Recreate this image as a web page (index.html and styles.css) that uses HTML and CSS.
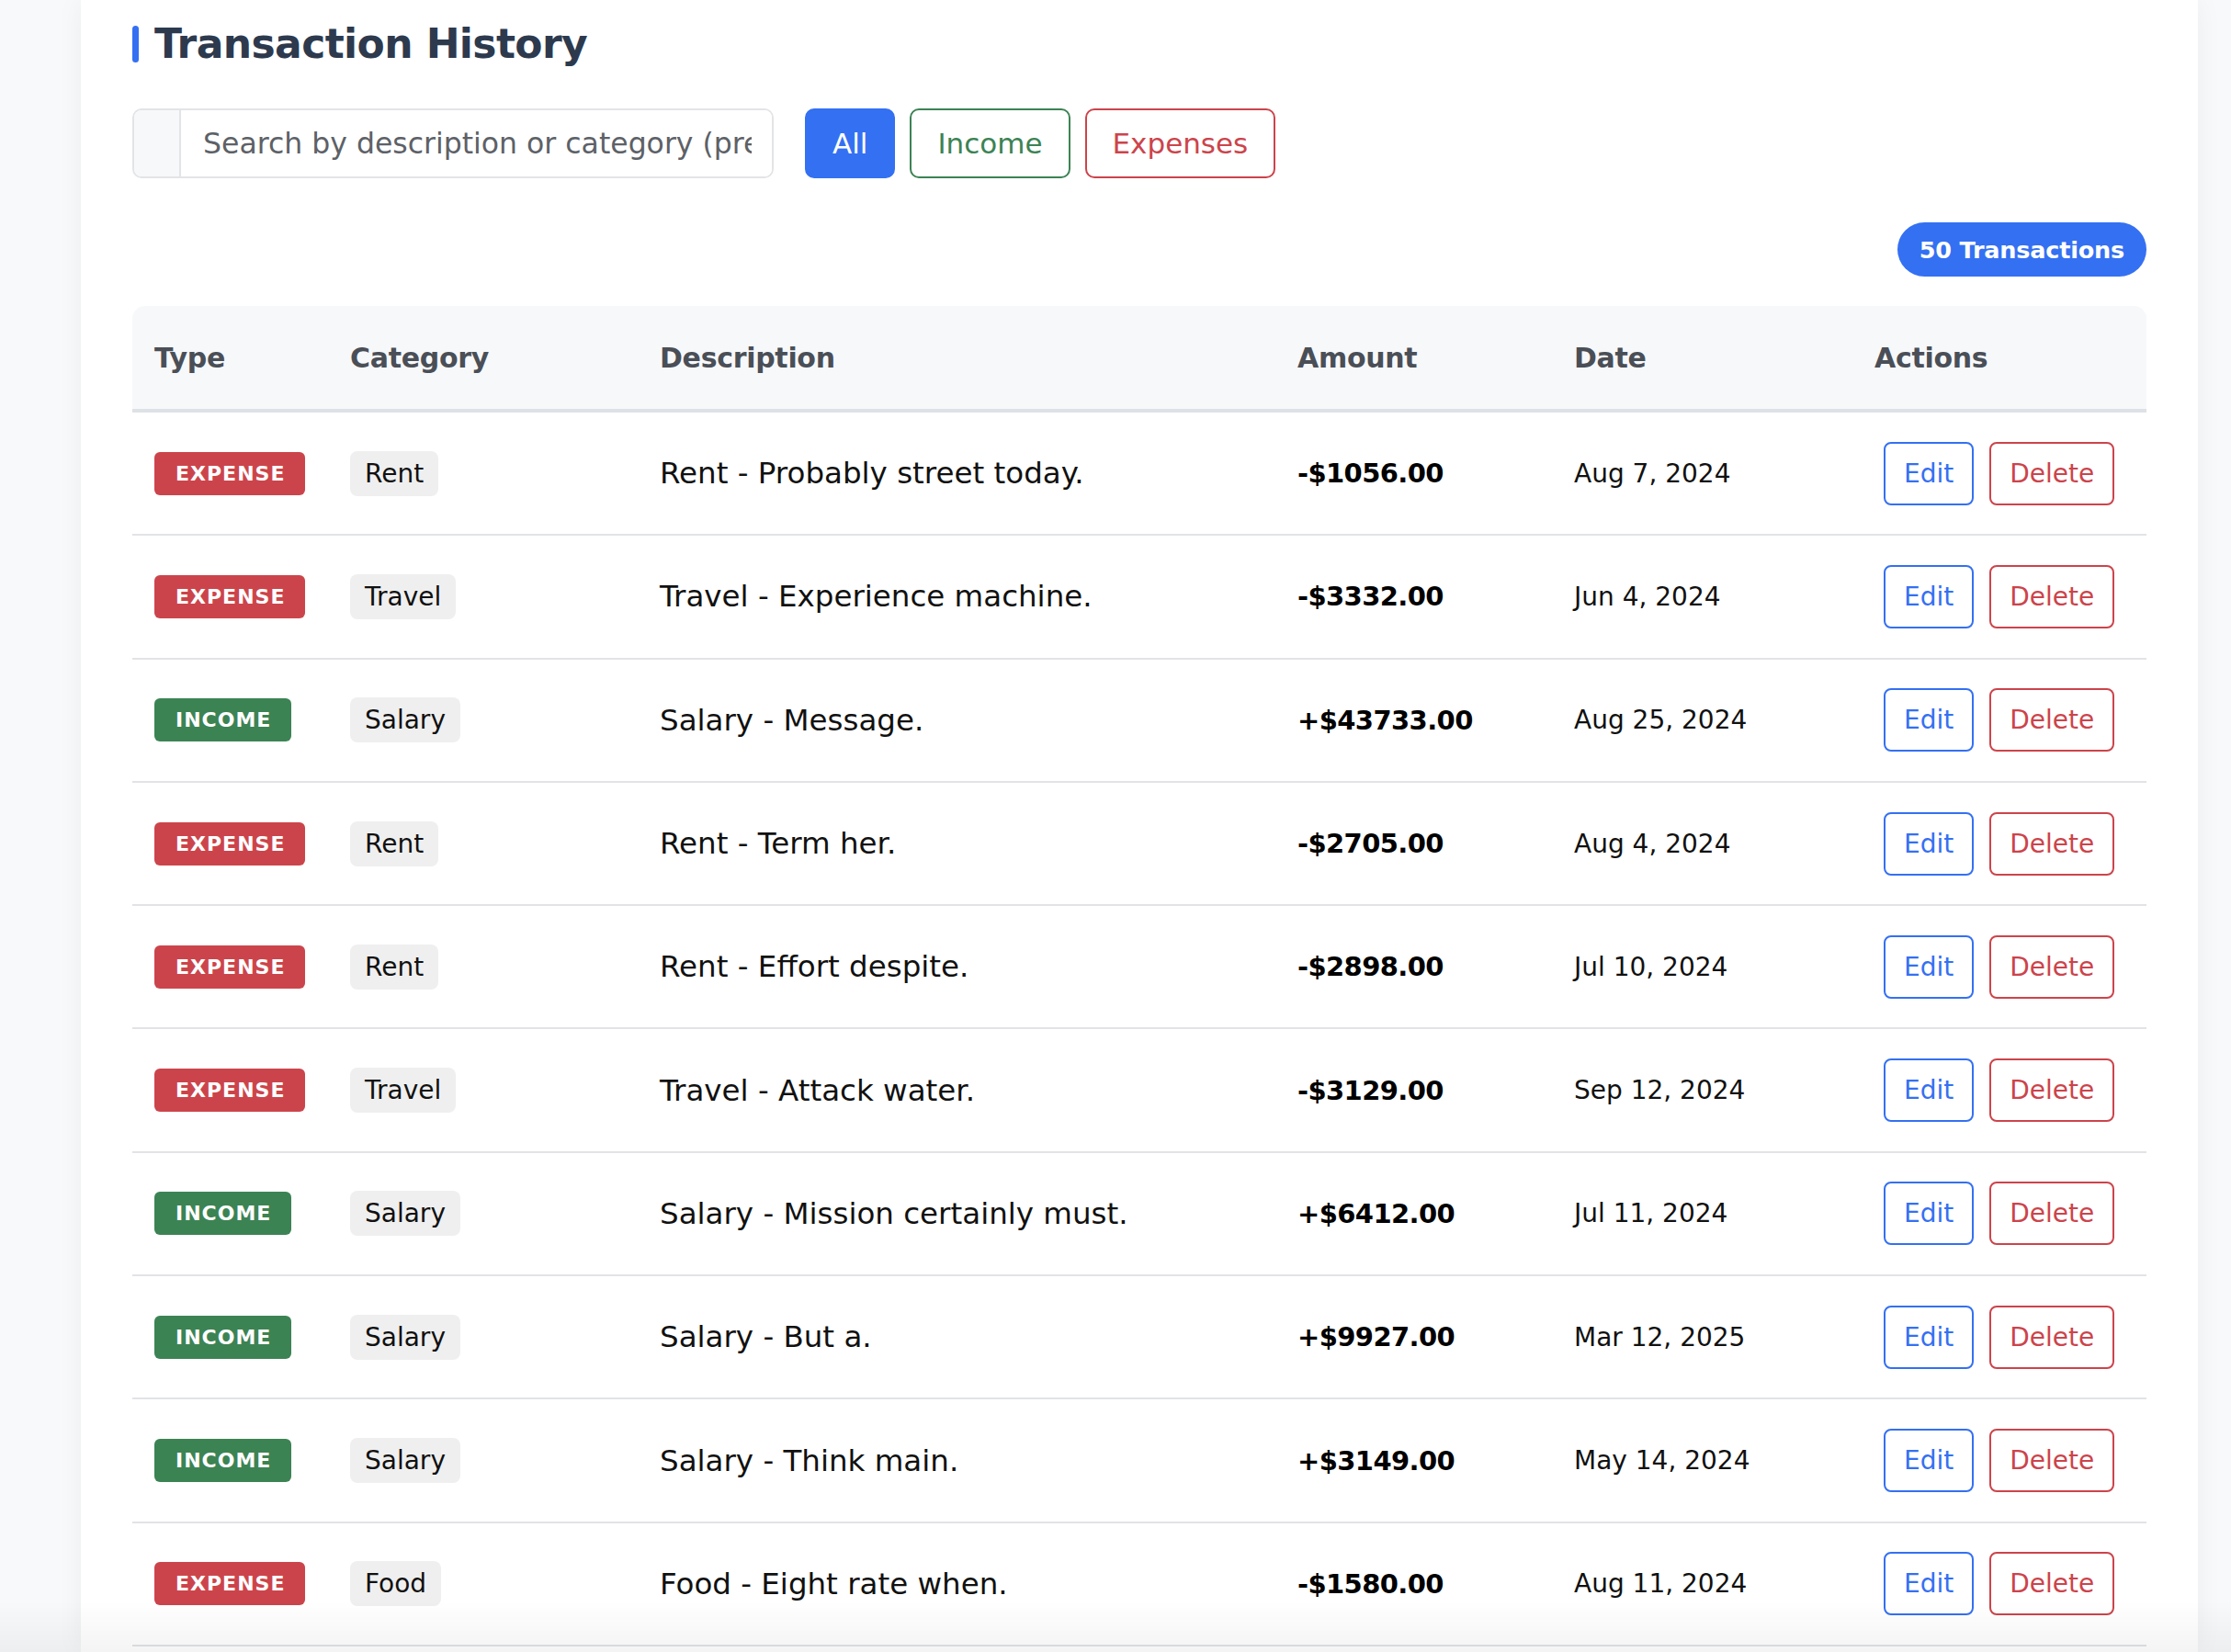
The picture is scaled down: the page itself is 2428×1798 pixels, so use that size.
FILE: index.html
```html
<!DOCTYPE html>
<html lang="en">
<head>
<meta charset="utf-8">
<title>Transaction History</title>
<link rel="stylesheet" href="styles.css">
</head>
<body>
<div class="page">
  <section class="card">
    <h2 class="title"><span class="accent"></span>Transaction History</h2>

    <div class="toolbar">
      <div class="search">
        <span class="search-addon"></span>
        <input class="search-input" type="text" placeholder="Search by description or category (press Enter to search)">
      </div>
      <div class="filters">
        <button class="filter filter-all">All</button>
        <button class="filter filter-income">Income</button>
        <button class="filter filter-expense">Expenses</button>
      </div>
    </div>

    <div class="summary"><span class="count">50 Transactions</span></div>

    <table class="tx">
      <colgroup>
        <col class="c-type"><col class="c-cat"><col class="c-desc"><col class="c-amt"><col class="c-date"><col class="c-act">
      </colgroup>
      <thead>
        <tr><th>Type</th><th>Category</th><th>Description</th><th>Amount</th><th>Date</th><th>Actions</th></tr>
      </thead>
      <tbody>
        <tr><td><span class="type type-exp">EXPENSE</span></td><td><span class="cat">Rent</span></td><td class="desc">Rent - Probably street today.</td><td class="amt">-$1056.00</td><td class="date">Aug 7, 2024</td><td class="act"><button class="btn btn-edit">Edit</button><button class="btn btn-del">Delete</button></td></tr>
        <tr><td><span class="type type-exp">EXPENSE</span></td><td><span class="cat">Travel</span></td><td class="desc">Travel - Experience machine.</td><td class="amt">-$3332.00</td><td class="date">Jun 4, 2024</td><td class="act"><button class="btn btn-edit">Edit</button><button class="btn btn-del">Delete</button></td></tr>
        <tr><td><span class="type type-inc">INCOME</span></td><td><span class="cat">Salary</span></td><td class="desc">Salary - Message.</td><td class="amt">+$43733.00</td><td class="date">Aug 25, 2024</td><td class="act"><button class="btn btn-edit">Edit</button><button class="btn btn-del">Delete</button></td></tr>
        <tr><td><span class="type type-exp">EXPENSE</span></td><td><span class="cat">Rent</span></td><td class="desc">Rent - Term her.</td><td class="amt">-$2705.00</td><td class="date">Aug 4, 2024</td><td class="act"><button class="btn btn-edit">Edit</button><button class="btn btn-del">Delete</button></td></tr>
        <tr><td><span class="type type-exp">EXPENSE</span></td><td><span class="cat">Rent</span></td><td class="desc">Rent - Effort despite.</td><td class="amt">-$2898.00</td><td class="date">Jul 10, 2024</td><td class="act"><button class="btn btn-edit">Edit</button><button class="btn btn-del">Delete</button></td></tr>
        <tr><td><span class="type type-exp">EXPENSE</span></td><td><span class="cat">Travel</span></td><td class="desc">Travel - Attack water.</td><td class="amt">-$3129.00</td><td class="date">Sep 12, 2024</td><td class="act"><button class="btn btn-edit">Edit</button><button class="btn btn-del">Delete</button></td></tr>
        <tr><td><span class="type type-inc">INCOME</span></td><td><span class="cat">Salary</span></td><td class="desc">Salary - Mission certainly must.</td><td class="amt">+$6412.00</td><td class="date">Jul 11, 2024</td><td class="act"><button class="btn btn-edit">Edit</button><button class="btn btn-del">Delete</button></td></tr>
        <tr><td><span class="type type-inc">INCOME</span></td><td><span class="cat">Salary</span></td><td class="desc">Salary - But a.</td><td class="amt">+$9927.00</td><td class="date">Mar 12, 2025</td><td class="act"><button class="btn btn-edit">Edit</button><button class="btn btn-del">Delete</button></td></tr>
        <tr><td><span class="type type-inc">INCOME</span></td><td><span class="cat">Salary</span></td><td class="desc">Salary - Think main.</td><td class="amt">+$3149.00</td><td class="date">May 14, 2024</td><td class="act"><button class="btn btn-edit">Edit</button><button class="btn btn-del">Delete</button></td></tr>
        <tr><td><span class="type type-exp">EXPENSE</span></td><td><span class="cat">Food</span></td><td class="desc">Food - Eight rate when.</td><td class="amt">-$1580.00</td><td class="date">Aug 11, 2024</td><td class="act"><button class="btn btn-edit">Edit</button><button class="btn btn-del">Delete</button></td></tr>
      </tbody>
    </table>
  </section>
</div>
<div class="bottom-fade"></div>
</body>
</html>
```
FILE: styles.css
```css
html, body {
  margin: 0;
  padding: 0;
}
body {
  background: #f8f9fa;
  font-family: "DejaVu Sans", "Noto Sans", sans-serif;
  color: #111;
  height: 1798px;
  overflow: hidden;
}
.page {
  padding: 0 36px 0 88px;
}
.card {
  background: #fff;
  width: 2304px;
  box-sizing: border-box;
  min-height: 1798px;
  padding: 19px 56px 0;
  box-shadow: 0 0 28px rgba(0, 0, 0, 0.05);
}

/* title */
.title {
  display: flex;
  align-items: center;
  gap: 17px;
  margin: 0;
  font-size: 44px;
  line-height: 58px;
  font-weight: 700;
  color: #2d3a4e;
  letter-spacing: -0.6px;
}
.accent {
  width: 7px;
  height: 40px;
  border-radius: 4px;
  background: #3470f2;
}

/* toolbar */
.toolbar {
  display: flex;
  align-items: center;
  gap: 34px;
  margin-top: 41px;
}
.search {
  display: flex;
  width: 698px;
  height: 76px;
  box-sizing: border-box;
  border: 2px solid #e2e4e7;
  border-radius: 10px;
  overflow: hidden;
}
.search-addon {
  width: 49px;
  background: #f7f8fa;
  border-right: 2px solid #e2e4e7;
}
.search-input {
  flex: 1;
  min-width: 0;
  border: 0;
  outline: none;
  padding: 0 22px 0 24px;
  font-family: inherit;
  font-size: 31.5px;
  color: #333;
  background: #fff;
}
.search-input::placeholder {
  color: #5d6167;
}
.filters {
  display: flex;
  gap: 16px;
}
.filter {
  height: 76px;
  box-sizing: border-box;
  padding: 0 28px;
  border: 2px solid;
  border-radius: 10px;
  background: #fff;
  font-family: inherit;
  font-size: 31px;
}
.filter-all {
  background: #3470f2;
  border-color: #3470f2;
  color: #fff;
}
.filter-income {
  border-color: #3c8354;
  color: #3c8354;
}
.filter-expense {
  border-color: #cc444b;
  color: #cc444b;
}

/* count badge */
.summary {
  display: flex;
  justify-content: flex-end;
  margin-top: 48px;
}
.count {
  display: inline-flex;
  align-items: center;
  height: 59px;
  padding: 0 24px;
  border-radius: 30px;
  background: #3470f2;
  color: #fff;
  font-size: 25.5px;
  font-weight: 700;
  letter-spacing: -0.2px;
}

/* table */
.tx {
  width: 2192px;
  margin-top: 32px;
  table-layout: fixed;
  border-collapse: separate;
  border-spacing: 0;
}
.c-type { width: 213px; }
.c-cat { width: 337px; }
.c-desc { width: 694px; }
.c-amt { width: 301px; }
.c-date { width: 327px; }
.c-act { width: 320px; }

.tx th {
  height: 112px;
  padding: 0 24px;
  text-align: left;
  background: #f7f8fa;
  border-bottom: 4px solid #dee1e6;
  font-size: 30px;
  font-weight: 700;
  color: #4a4f57;
  letter-spacing: -0.3px;
}
.tx th:first-child { border-top-left-radius: 14px; }
.tx th:last-child { border-top-right-radius: 14px; }

.tx td {
  height: 132.3px;
  padding: 0 24px;
  border-bottom: 2px solid #e1e3e7;
  vertical-align: middle;
  white-space: nowrap;
}
.type {
  display: inline-block;
  height: 47px;
  line-height: 47px;
  padding: 0 22px 0 23px;
  border-radius: 6px;
  color: #fff;
  font-size: 22px;
  font-weight: 700;
  letter-spacing: 1px;
}
.type-exp { background: #cc444b; }
.type-inc { background: #3c8354; }
.cat {
  display: inline-block;
  height: 49px;
  line-height: 49px;
  padding: 0 16px;
  border-radius: 8px;
  background: #efefef;
  font-size: 28px;
  color: #111;
}
.desc {
  font-size: 32.5px;
  color: #111;
}
.amt {
  font-size: 29px;
  font-weight: 700;
  color: #000;
  letter-spacing: -0.6px;
}
.date {
  font-size: 28px;
  color: #111;
}
.tx td.act {
  padding-left: 34px;
}
.btn {
  height: 69px;
  box-sizing: border-box;
  padding: 0 20px;
  border: 2px solid;
  border-radius: 8px;
  background: #fff;
  font-family: inherit;
  font-size: 28px;
  vertical-align: middle;
}
.btn + .btn { margin-left: 17px; }
.btn-edit { border-color: #3470f2; color: #3470f2; }
.btn-del { border-color: #cc444b; color: #cc444b; }

.bottom-fade {
  position: fixed;
  left: 0;
  right: 0;
  bottom: 0;
  height: 56px;
  background: linear-gradient(to bottom, rgba(0, 0, 0, 0), rgba(0, 0, 0, 0.045));
  pointer-events: none;
}
```
